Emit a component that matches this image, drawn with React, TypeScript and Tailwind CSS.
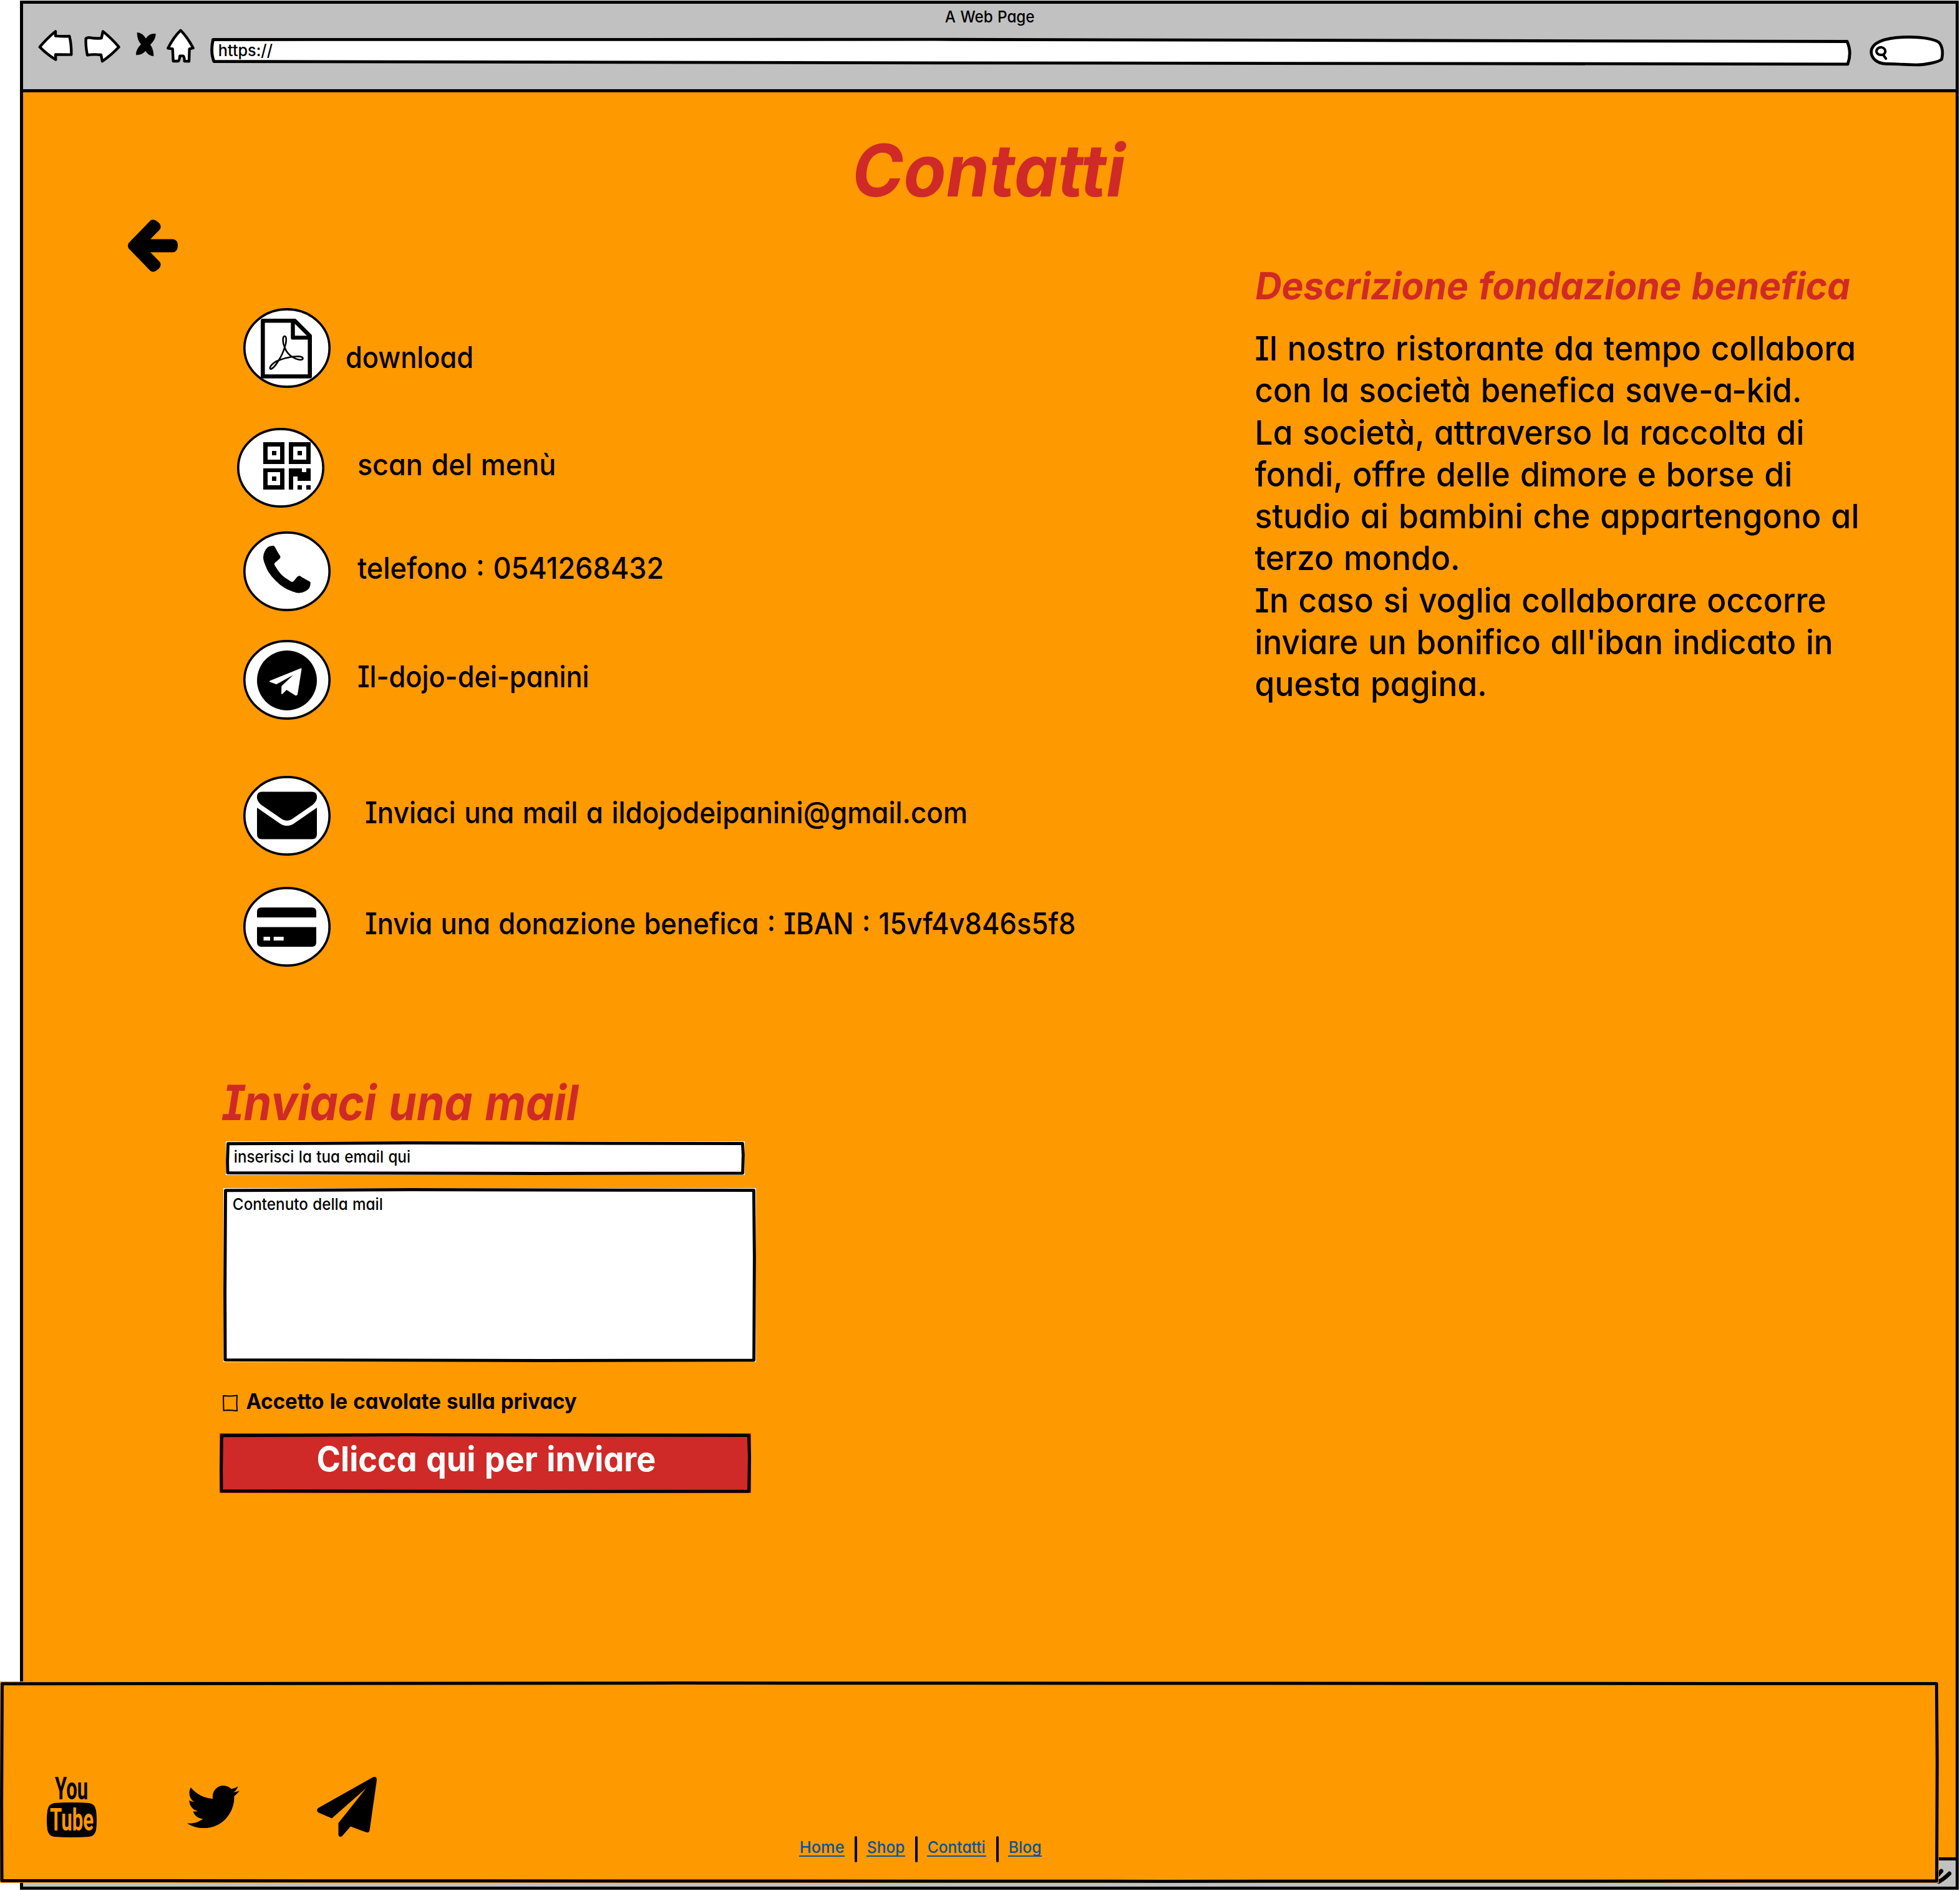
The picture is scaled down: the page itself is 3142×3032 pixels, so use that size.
import { useLayoutEffect, useRef, useState, type ReactNode } from "react";
import { FaTwitter } from "react-icons/fa";

/* A single line of text condensed or widened to a given ink width. */
function Line({ w, size, slant = 0, children }: { w: number; size: number; slant?: number; children: string }) {
  const ref = useRef<HTMLSpanElement>(null);
  const [scale, setScale] = useState(1);
  const bearing = size * 0.047;
  useLayoutEffect(() => {
    if (ref.current) setScale(w / (ref.current.offsetWidth - bearing * 2));
  }, [w, bearing]);
  return (
    <span className="block whitespace-pre" style={{ width: w, fontSize: size }}>
      <span
        ref={ref}
        className="inline-block origin-left whitespace-pre [word-spacing:0.04em]"
        style={{ transform: `translateX(${-bearing * scale}px) skewX(${-slant}deg) scaleX(${scale})` }}
      >
        {children}
      </span>
    </span>
  );
}

/* A box whose outline is slightly uneven, as if drawn by hand. */
function SketchBox({ w, h, className, children }: { w: number; h: number; className: string; children?: ReactNode }) {
  return (
    <div className={`relative shrink-0 ${className}`} style={{ width: w, height: h }}>
      <svg className="absolute inset-0" width={w} height={h} fill="none" stroke="#000" strokeWidth="5" strokeLinejoin="round">
        <path
          d={`M3.5 3.8 L${w * 0.35} 2.6 L${w * 0.75} 3.2 L${w - 3.6} 3.6 L${w - 2.6} ${h * 0.4} L${w - 3.4} ${h - 3} L${w * 0.6} ${h - 2.6} L3 ${h - 3.6} L2.6 ${h * 0.6} Z`}
        />
      </svg>
      <div className="relative">{children}</div>
    </div>
  );
}

function Badge({ children }: { children: ReactNode }) {
  return (
    <svg className="shrink-0" width="140" height="128" viewBox="0 0 140 128">
      <ellipse cx="70" cy="64" rx="68.2" ry="62.2" fill="#fff" stroke="#000" strokeWidth="3.7" />
      {children}
    </svg>
  );
}

const pdf = (
  <g transform="translate(28 17)" fill="none" stroke="#000" strokeLinejoin="round">
    <path strokeWidth="6.6" d="M3.3 3.3H54.5L78.7 27.5V92.5H3.3Z" />
    <path strokeWidth="6.4" d="M51.5 3.3V30.4H78.5" />
    <path
      strokeWidth="2.6"
      d="M38.3 46C34.5 38 35 28 38.3 28S41.6 38 38.3 46C35 57 30 65 28 68C24 75 18 81.500 15.300 80.500C13 79 18 71 28 67C37 63.500 44 62 50 61C58 60 68 60 67.500 64C66 68 56 65 50 61C44 57 40 51 38.300 46"
    />
  </g>
);

const qr = (
  <g transform="translate(42 23.300) scale(6.873)" shapeRendering="crispEdges">
    <path
      fillRule="evenodd"
      d="M0 0h5v5h-5zM1 1v3h3v-3zM2 2h1v1h-1zM6 0h5v5h-5zM7 1v3h3v-3zM8 2h1v1h-1zM0 6h5v5h-5zM1 7v3h3v-3zM2 8h1v1h-1zM6 6h3v1h1v-1h1v3h-3v-1h-1v3h-1zM8 10h1v1h-1zM10 10h1v1h-1z"
    />
  </g>
);

const phone = (
  <g transform="translate(32 23) scale(0.0538)">
    <path d="M1408 1112q0 27-10 70.5t-21 68.500q-21 50-122 106-94 51-186 51-27 0-52.500-3.500t-57.500-12.500-47.500-14.500-55.500-20.500-49-18q-98-35-175-83-128-79-264.500-215.500t-215.500-264.500q-48-77-83-175-3-9-18-49t-20.500-55.500-14.500-47.500-12.500-57.500-3.500-52.500q0-92 51-186 56-101 106-122 25-11 68.500-21t70.500-10q14 0 21 3 18 6 53 76 11 19 30 54t35 63.500 31 53.500q3 4 17.500 25t21.500 35.500 7 28.500q0 20-28.500 50t-62 55-62 53-28.500 46q0 9 5 22.500t8.500 20.500 14 24 11.500 19q76 137 174 235t235 174q2 1 19 11.500t24 14 20.500 8.500 22.500 5q18 0 46-28.500t53-62 55-62 50-28.500q14 0 28.500 7t35.500 21.500 25 17.500q25 15 53.500 31t63.500 35 54 30q70 35 76 53 3 7 3 21z" />
  </g>
);

const telegram = (
  <g transform="translate(22 17)">
    <circle cx="48" cy="48" r="48" />
    <path
      fill="#fff"
      stroke="#fff"
      strokeWidth="2"
      strokeLinejoin="round"
      d="M70.500 29.500L21 49.500L31 53L64.500 34.500L40.300 57.500L40 69L47.300 61.800L62.300 71.300L64 70.300Z"
    />
  </g>
);

const mail = (
  <g transform="translate(22 25.500)">
    <path d="M8 0H88Q96 0 96 8V10C95.500 15 91 20 87 22.500L58 42.500Q48 50 38 42.500L9 22.500C5 20 .5 15 0 10V8Q0 0 8 0Z" />
    <path d="M0 25.500L34 49Q48 60 62 49L96 25.500V68Q96 76 88 76H8Q0 76 0 68Z" />
  </g>
);

const card = (
  <g transform="translate(22 33)">
    <path d="M7 0H88Q95 0 95 7V16H0V7Q0 0 7 0Z" />
    <path fillRule="evenodd" d="M0 31.500H95V56Q95 63 88 63H7Q0 63 0 56ZM10.500 47V53H21V47ZM26.700 47V53H42.700V47Z" />
  </g>
);

const contacts = [
  { icon: pdf, text: "download", w: 201, row: "mt-[58px] ml-[185px] gap-[26px]", label: "mt-[49px]" },
  { icon: qr, text: "scan del menù", w: 314, row: "mt-16 ml-[175px] gap-[55px]", label: "mt-[29px]" },
  { icon: phone, text: "telefono : 0541268432", w: 487, row: "mt-[38px] ml-[185px] gap-[45px]", label: "mt-[29px]" },
  { icon: telegram, text: "Il-dojo-dei-panini", w: 367, row: "mt-[46px] ml-[185px] gap-[45px]", label: "mt-[29px]" },
  { icon: mail, text: "Inviaci una mail a ildojodeipanini@gmail.com", w: 962, row: "mt-[90px] ml-[185px] gap-[57px]", label: "mt-[29px]" },
  { icon: card, text: "Invia una donazione benefica : IBAN : 15vf4v846s5f8", w: 1135, row: "mt-[50px] ml-[185px] gap-[57px]", label: "mt-[29px]" },
];

const description: [string, number][] = [
  ["Il nostro ristorante da tempo collabora", 959],
  ["con la società benefica save-a-kid.", 872],
  ["La società, attraverso la raccolta di", 876],
  ["fondi, offre delle dimore e borse di", 857],
  ["studio ai bambini che appartengono al", 964],
  ["terzo mondo.", 324],
  ["In caso si voglia collaborare occorre", 911],
  ["inviare un bonifico all'iban indicato in", 922],
  ["questa pagina.", 368],
];

function BrowserBar() {
  return (
    <header className="h-[142px] shrink-0 border-b-[5px] border-black bg-[#c1c1c1]">
      <div className="flex h-[34px] justify-center pt-[5px] leading-[32px]">
        <Line w={141} size={26}>A Web Page</Line>
      </div>
      <div className="flex">
        <svg className="mt-[4px] ml-[21px] shrink-0" width="200" height="60" viewBox="174 132 600 180" fill="#fff" stroke="#000" strokeWidth="13" strokeLinejoin="round">
          <path d="M191 226Q226 184 267 151L267 173Q300 176 334 174Q344 215 343 263L267 262L268 287Q226 262 191 226Z" />
          <path d="M413 185Q420 180 432 181Q464 187 488 183L495 151Q536 184 572 226Q534 266 492 295L486 264Q450 260 420 265Q411 220 413 185Z" />
          <path
            fill="#000"
            strokeWidth="2"
            d="M660 157Q686 159 702 187Q716 160 748 163Q748 190 722 215Q738 238 738 269Q714 268 700 244Q684 264 655 264Q654 238 679 213Q660 192 660 157Z"
          />
        </svg>
        <svg className="mt-[4px] ml-[7px] shrink-0" width="48" height="60" viewBox="796 132 144 180" fill="#fff" stroke="#000" strokeWidth="13" strokeLinejoin="round">
          <path d="M870 146Q902 178 930 231L912 235L910 295L888 294Q888 270 882 269L866 269Q864 294 858 294L834 294L831 235L809 232Q836 178 870 146Z" />
        </svg>
        <div className="relative ml-[24px] h-[46px] w-[2632px] shrink-0 pt-[25px]">
          <svg className="absolute top-[20px] left-0" width="2632" height="46" viewBox="337 60 2632 46" fill="#fff" stroke="#000" strokeWidth="4.800" strokeLinejoin="round">
            <path d="M341.500 63.500L1500 63.200L2961 66.500Q2969 84 2962 102.800L1500 100.800L343 98.500Q337 84 341.500 63.500Z" />
          </svg>
          <div className="relative pl-[14px] leading-[32px]">
            <Line w={85} size={26}>https://</Line>
          </div>
        </div>
        <svg className="mt-[15px] ml-[28px] shrink-0" width="120" height="54" viewBox="465 165 360 162" fill="none" stroke="#000" strokeLinecap="round" strokeLinejoin="round">
          <path
            fill="#fff"
            strokeWidth="14"
            d="M473 250C473 210 525 178 655 178C735 178 785 192 800 205C820 230 818 258 812 285C800 298 735 312 690 312C620 312 600 306 545 307C500 305 473 280 473 250Z"
          />
          <path strokeWidth="12" d="M530 263Q502 268 498 248Q499 228 521 227Q542 232 541 250Q539 258 530 263L544 282" />
        </svg>
      </div>
    </header>
  );
}

function MailForm() {
  return (
    <section className="mt-[170px]">
      <h2 className="ml-[156px] leading-[96px] font-bold text-[#cf2a27]">
        <Line w={564} size={78} slant={9}>Inviaci una mail</Line>
      </h2>
      <SketchBox w={832} h={54} className="mt-[14px] ml-[157px] bg-white">
        <div className="pt-[9px] pl-[14px] leading-[32px]">
          <Line w={281} size={26}>inserisci la tua email qui</Line>
        </div>
      </SketchBox>
      <SketchBox w={854} h={279} className="mt-[21px] ml-[153px] bg-white">
        <div className="pt-[10px] pl-[16px] leading-[32px]">
          <Line w={239} size={26}>Contenuto della mail</Line>
        </div>
      </SketchBox>
      <div className="mt-[41px] ml-[152px] flex h-[40px] gap-[15px]">
        <svg className="mt-[11px]" width="24" height="27" fill="none" stroke="#000" strokeWidth="2">
          <path d="M1 2L12 2.500L23 1.500L22.500 14L23 26L10 25L1.500 25.500Z" />
        </svg>
        <div className="pt-[2px] leading-[40px] font-bold">
          <Line w={527} size={34}>Accetto le cavolate sulla privacy</Line>
        </div>
      </div>
      <SketchBox w={852} h={96} className="mt-[33px] ml-[147px] bg-[#cf2a27]">
        <div className="flex pt-[9px] pl-[158px] leading-[64px] font-bold text-white">
          <Line w={539} size={55}>Clicca qui per inviare</Line>
        </div>
      </SketchBox>
    </section>
  );
}

function FooterLink({ w, children }: { w: number; children: string }) {
  return (
    <a className="border-b-2 border-[#0b5394] px-[2px] leading-[26px] text-[#0b5394]">
      <Line w={w} size={26}>{children}</Line>
    </a>
  );
}

function Separator() {
  return <span className="-mt-[5px] mr-[15px] ml-[16px] h-[42px] w-[4px] rounded-sm bg-black" />;
}

function Footer() {
  return (
    <SketchBox w={3108} h={323} className="-mt-[334px] bg-[#ff9900]">
      <div className="flex">
        <svg className="mt-[153px] ml-[75px] shrink-0 overflow-visible" width="80" height="98" viewBox="0 0 80 98" fontFamily="Roboto" fontWeight="700">
          <text x="13" y="36" fontSize="50" textLength="53" lengthAdjust="spacingAndGlyphs">You</text>
          <path d="M12 42Q40 40 68 42Q77 43 79 54Q81 70 79 85Q77 95 68 96Q40 98 12 96Q3 95 1 85Q-1 70 1 54Q3 43 12 42Z" />
          <text x="5" y="86" fontSize="50" fill="#ff9900" textLength="70" lengthAdjust="spacingAndGlyphs">Tube</text>
        </svg>
        <FaTwitter className="mt-[159px] ml-[145px] h-[84px] w-[84px] shrink-0" />
        <svg className="mt-[153px] ml-[124px] shrink-0" width="96" height="98" viewBox="0 0 96 98">
          <path d="M79 18L24 66.500L3 57.500Q-2 54 2 50L89 1Q96 -2 96 5L84.500 86Q83 91 78 88.500L54 79.500L40 95.500Q35 97 34.500 93V74Z" />
        </svg>
        <nav className="mt-[253px] ml-[677px] flex items-start">
          <FooterLink w={69}>Home</FooterLink>
          <Separator />
          <FooterLink w={58}>Shop</FooterLink>
          <Separator />
          <FooterLink w={91}>Contatti</FooterLink>
          <Separator />
          <FooterLink w={50}>Blog</FooterLink>
        </nav>
      </div>
    </SketchBox>
  );
}

export default function App() {
  return (
    <div className="h-[3032px] w-[3142px] overflow-hidden bg-white font-['Inter',sans-serif] font-medium text-black [font-feature-settings:'cv11','cv08']">
      <div className="mt-px ml-[32px] flex h-[3029px] w-[3108px] flex-col border-[5px] border-black">
        <BrowserBar />
        <main className="flex-1 bg-[#ff9900]">
          <h1 className="flex justify-center pt-[55px] leading-[140px] font-bold text-[#cf2a27]">
            <Line w={427} size={116} slant={9}>Contatti</Line>
          </h1>
          <div className="mt-[9px] flex">
            <div className="w-[1977px] shrink-0 pl-[168px]">
              <svg width="80" height="84" viewBox="0 0 80 84" stroke="#000" strokeWidth="6" strokeLinejoin="round">
                <path d="M4 39L38 4Q42 2 46 6Q51 10 49 14L29 34.500H72Q77 35 77 42T72 49.500H29L49 70Q51 74 46 78Q42 82 38 80L4 45Q2 42 4 39Z" />
              </svg>
              <ul>
                {contacts.map((c) => (
                  <li key={c.text} className={`flex ${c.row}`}>
                    <Badge>{c.icon}</Badge>
                    <div className={`leading-[60px] ${c.label}`}>
                      <Line w={c.w} size={48}>{c.text}</Line>
                    </div>
                  </li>
                ))}
              </ul>
              <MailForm />
            </div>
            <section className="mt-[68px]">
              <h2 className="pl-[2px] leading-[76px] font-bold text-[#cf2a27]">
                <Line w={948} size={60} slant={9}>Descrizione fondazione benefica</Line>
              </h2>
              <div className="mt-[29px] leading-[67.250px]">
                {description.map(([text, w]) => (
                  <Line key={text} w={w} size={54}>{text}</Line>
                ))}
              </div>
            </section>
          </div>
        </main>
        <div className="flex h-[47px] shrink-0 justify-end border-t-[5px] border-black bg-[#c1c1c1]">
          <svg className="mt-[10px] mr-[4px]" width="32" height="30" fill="none" stroke="#000" strokeWidth="6.500" strokeLinecap="round">
            <path d="M6 15L13 7M9 24Q17 20 26 11" />
          </svg>
        </div>
      </div>
      <Footer />
    </div>
  );
}
